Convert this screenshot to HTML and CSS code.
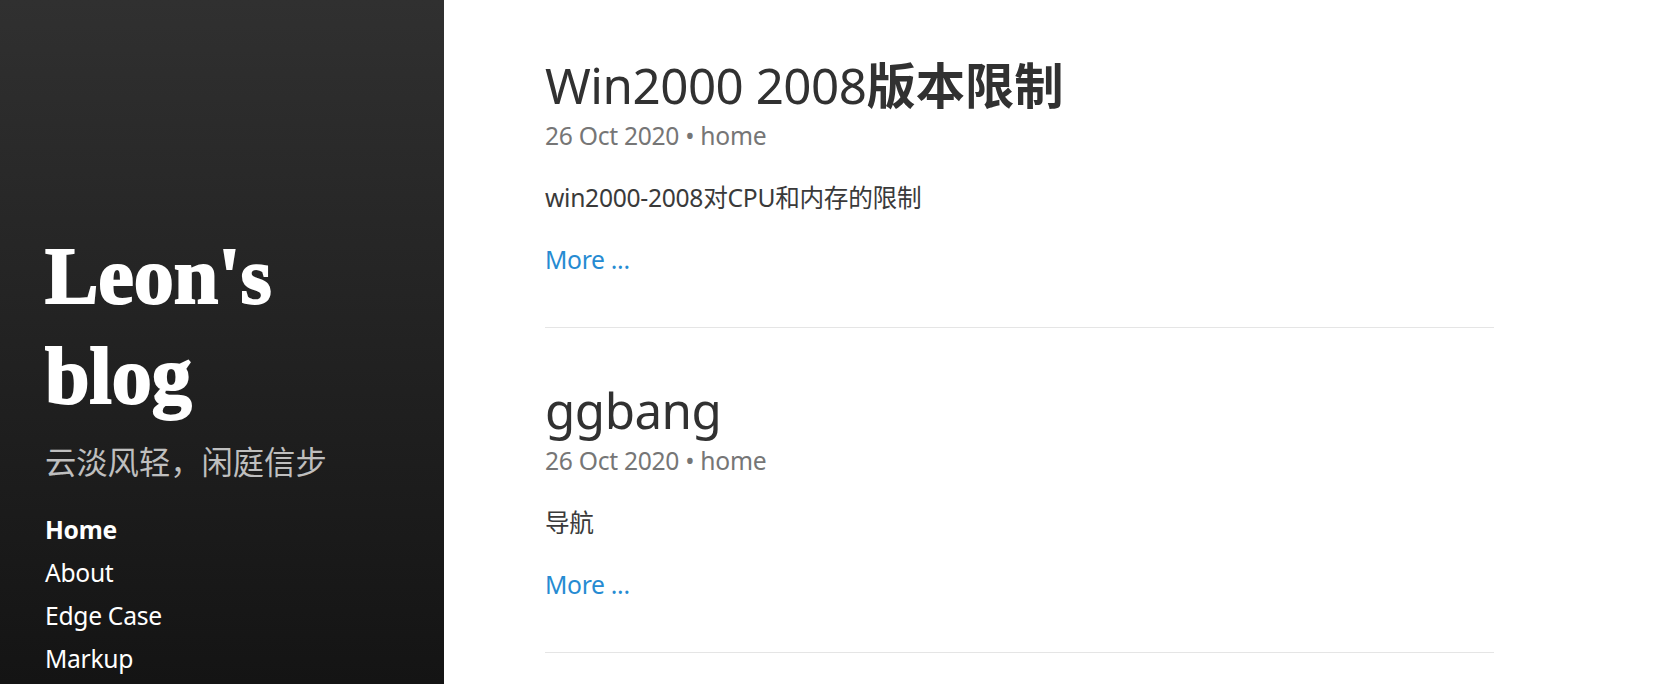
FILE: index.html
```html
<!DOCTYPE html>
<html lang="zh-CN">
<head>
<meta charset="utf-8">
<title>Leon's blog</title>
<link rel="stylesheet" href="styles.css">
</head>
<body>
<div class="layout">
  <aside class="sidebar">
    <h1 class="site-title"><a href="#">Leon's blog</a></h1>
    <p class="lead">云淡风轻，闲庭信步</p>
    <nav class="sidebar-nav">
      <a class="active" href="#">Home</a>
      <a href="#">About</a>
      <a href="#">Edge Case</a>
      <a href="#">Markup</a>
    </nav>
  </aside>
  <main class="content">
    <div class="posts">
      <article class="post">
        <h2 class="post-title">Win2000 2008<span class="han">版本限制</span></h2>
        <div class="post-meta">26 Oct 2020 • home</div>
        <p class="post-excerpt">win2000-2008对CPU和内存的限制</p>
        <p class="more"><a href="#">More ...</a></p>
      </article>
      <hr class="post-divider">
      <article class="post">
        <h2 class="post-title">ggbang</h2>
        <div class="post-meta">26 Oct 2020 • home</div>
        <p class="post-excerpt">导航</p>
        <p class="more"><a href="#">More ...</a></p>
      </article>
      <hr class="post-divider">
    </div>
  </main>
</div>
</body>
</html>
```

FILE: styles.css
```css
* {
  box-sizing: border-box;
}

html,
body {
  margin: 0;
  padding: 0;
}

body {
  font-family: "Noto Sans", "Noto Sans CJK SC", sans-serif;
  font-size: 24.67px;
  line-height: 1.5;
  letter-spacing: -0.3px;
  color: #313131;
  background: #fff;
}

.layout {
  display: flex;
  min-height: 100vh;
}

.sidebar {
  flex: 0 0 444px;
  height: 100vh;
  position: sticky;
  top: 0;
  overflow: hidden;
  padding: 226px 45px 0;
  background: linear-gradient(to bottom, #303030, #141414);
  color: rgba(255, 255, 255, 0.72);
}

.site-title {
  margin: 0;
  font-family: "Liberation Serif", serif;
  font-weight: 700;
  font-size: 80px;
  line-height: 100px;
  letter-spacing: 0;
}

.site-title a {
  color: #fff;
  text-decoration: none;
  -webkit-text-stroke: 2px #fff;
}

.lead {
  margin: 13px 0 0;
  font-size: 31.3px;
  line-height: 46px;
  letter-spacing: 0;
}

.sidebar-nav {
  margin-top: 23px;
  display: flex;
  flex-direction: column;
  align-items: flex-start;
}

.sidebar-nav a {
  color: #fff;
  text-decoration: none;
  line-height: 43px;
}

.sidebar-nav a.active {
  font-weight: 700;
}

.content {
  flex: 1;
  padding: 55px 0 0 101px;
}

.posts {
  max-width: 949px;
}

.post-title {
  margin: 0;
  font-size: 49.3px;
  line-height: 60px;
  font-weight: 400;
  letter-spacing: -0.5px;
  color: #313131;
}

.post-title .han {
  font-weight: 700;
  letter-spacing: 0;
}

.post-meta {
  margin-top: 2px;
  color: #767676;
}

.post-excerpt {
  margin: 25px 0 0;
  color: #3a3a3a;
}

.more {
  margin: 25px 0 0;
}

.more a {
  color: #268bd2;
  text-decoration: none;
}

.post-divider {
  border: 0;
  border-top: 1px solid #e5e5e5;
  margin: 49px 0 52px;
}
```
